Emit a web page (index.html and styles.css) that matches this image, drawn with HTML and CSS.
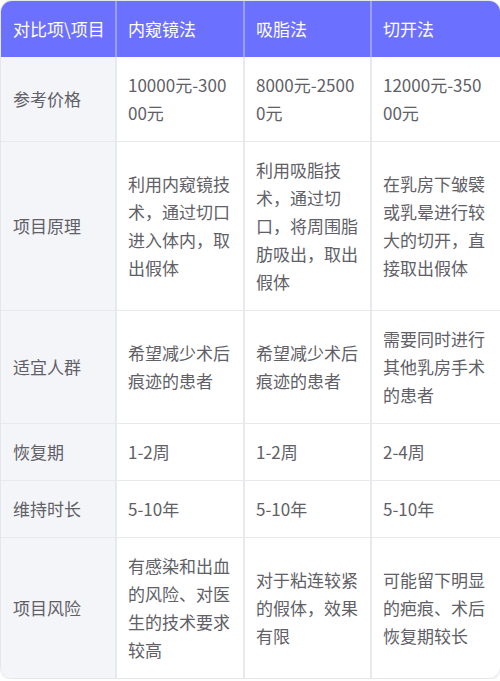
FILE: index.html
```html
<!DOCTYPE html>
<html lang="zh">
<head>
<meta charset="utf-8">
<link rel="stylesheet" href="styles.css">
</head>
<body>
<div class="wrap">
<table class="cmp">
<colgroup><col class="c1"><col class="c2"><col class="c3"><col class="c4"></colgroup>
<thead>
<tr><th class="nowrap">对比项\项目</th><th>内窥镜法</th><th>吸脂法</th><th>切开法</th></tr>
</thead>
<tbody>
<tr><td>参考价格</td><td>10000元-30000元</td><td>8000元-25000元</td><td>12000元-35000元</td></tr>
<tr><td>项目原理</td><td>利用内窥镜技术，通过切口进入体内，取出假体</td><td>利用吸脂技术，通过切口，将周围脂肪吸出，取出假体</td><td>在乳房下皱襞或乳晕进行较大的切开，直接取出假体</td></tr>
<tr><td>适宜人群</td><td>希望减少术后痕迹的患者</td><td>希望减少术后痕迹的患者</td><td>需要同时进行其他乳房手术的患者</td></tr>
<tr><td>恢复期</td><td>1-2周</td><td>1-2周</td><td>2-4周</td></tr>
<tr><td>维持时长</td><td>5-10年</td><td>5-10年</td><td>5-10年</td></tr>
<tr><td>项目风险</td><td>有感染和出血的风险、对医生的技术要求较高</td><td>对于粘连较紧的假体，效果有限</td><td>可能留下明显的疤痕、术后恢复期较长</td></tr>
</tbody>
</table>
</div>
</body>
</html>
```
FILE: styles.css
```css
html, body {
  margin: 0;
  padding: 0;
  background: #ffffff;
}
.wrap {
  width: 499px;
  border: 1px solid #e4e6eb;
  border-radius: 12px;
  overflow: hidden;
  box-shadow: 0 1px 2px rgba(0,0,0,0.08);
}
.cmp {
  width: 100%;
  border-collapse: separate;
  border-spacing: 0;
  table-layout: fixed;
  font-family: "Noto Sans CJK SC", "Noto Sans", sans-serif;
  font-size: 17px;
  line-height: 28px;
  color: #606066;
}
.c1 { width: 116px; }
.c2 { width: 128px; }
.c3 { width: 127px; }
.c4 { width: 128px; }
.cmp th, .cmp td {
  padding: 14px 11px 14px 11px;
  text-align: left;
  vertical-align: middle;
  word-break: break-all;
  border-right: 2px solid #e8e9ed;
  border-bottom: 1px solid #e8e9ed;
}
.cmp th:last-child, .cmp td:last-child { border-right: none; }
.cmp tbody tr:last-child td { border-bottom: none; }
.cmp th {
  background: #6c70fe;
  color: #ffffff;
  font-weight: 400;
  border-right-color: #9a9dfb;
  border-bottom: none;
}
.cmp .nowrap { white-space: nowrap; padding-right: 4px; }
.cmp td:first-child {
  background: #f4f5f9;
  padding-left: 12px;
}
.cmp th:first-child { padding-left: 12px; }
```
